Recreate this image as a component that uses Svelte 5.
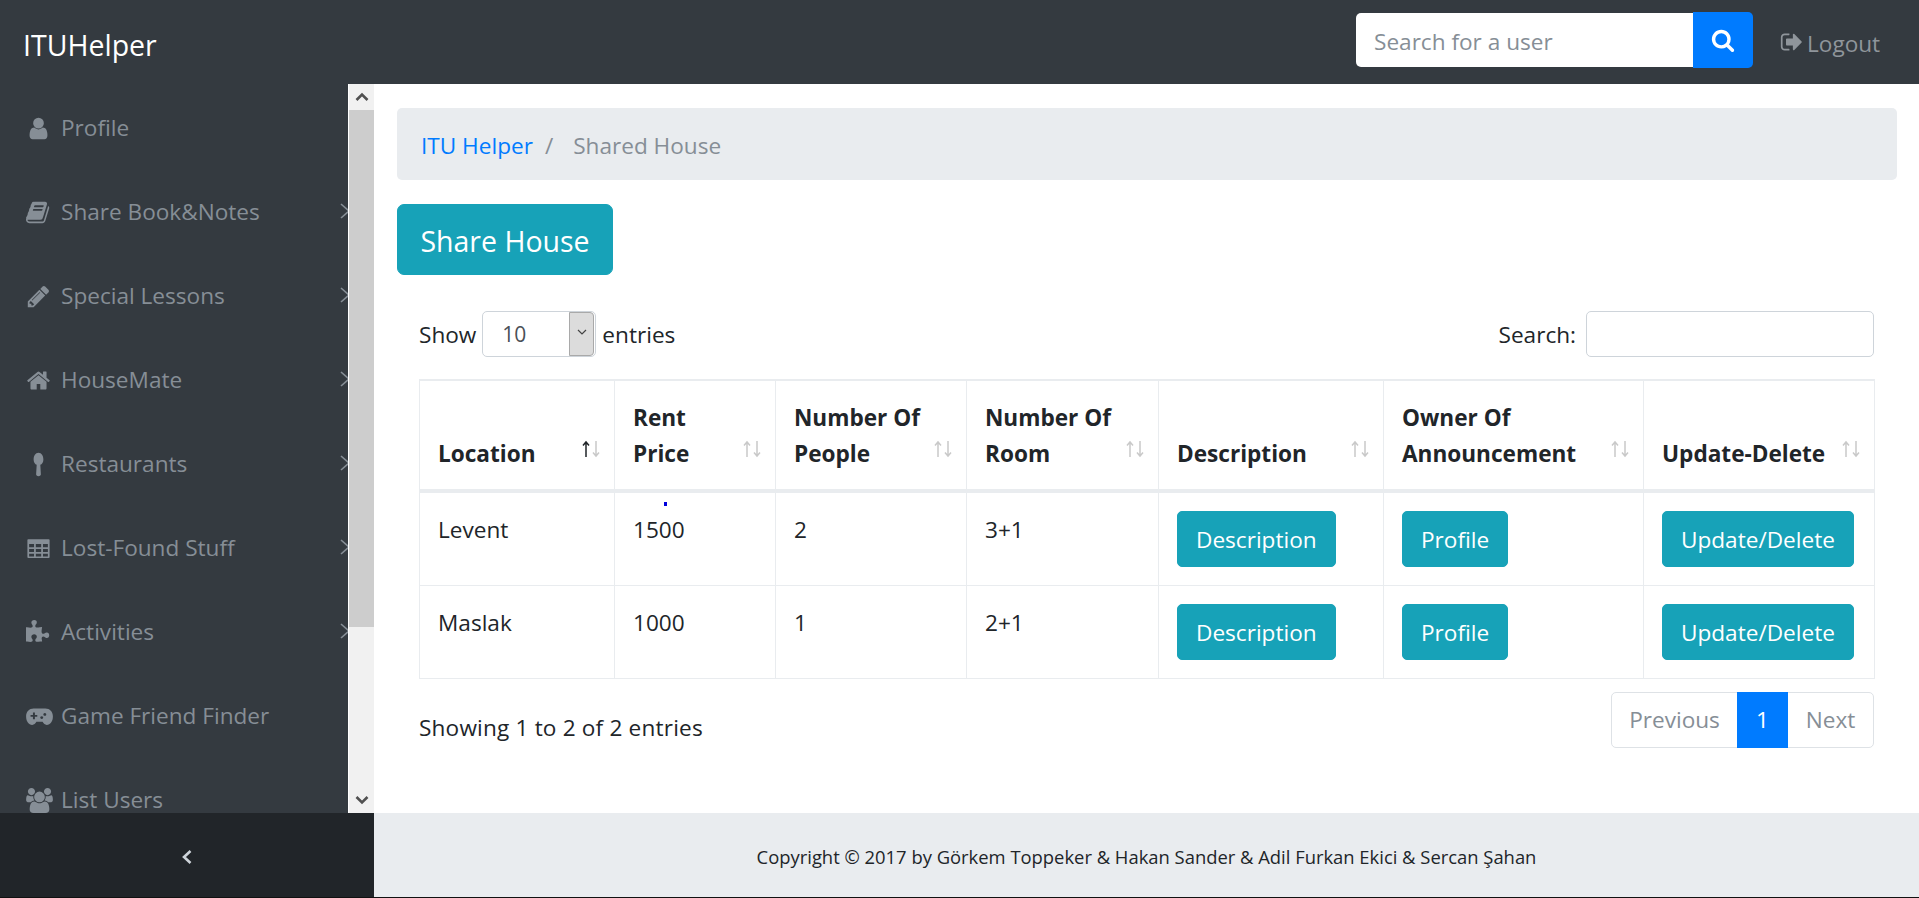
<script>
	const P = {
		user: 'M1536 1399q0 109-62.5 187t-150.5 78h-854q-88 0-150.5-78t-62.5-187q0-85 8.5-160.5t31.5-152 58.5-131 94-89 134.5-34.5q131 128 313 128t313-128q76 0 134.5 34.5t94 89 58.5 131 31.5 152 8.5 160.5zm-256-887q0 159-112.5 271.5t-271.5 112.5-271.5-112.5-112.5-271.5 112.5-271.5 271.5-112.5 271.5 112.5 112.5 271.5z',
		book: 'M1639 478q40 57 18 129l-275 906q-19 64-76.5 107.5t-122.5 43.5h-923q-77 0-148.5-53.5t-99.5-131.5q-24-67-2-127 0-4 3-27t4-37q1-8-3-21.5t-3-19.5q2-11 8-21t16.5-23.5 16.5-23.5q23-38 45-91.5t30-91.5q3-10 .5-30t-.5-28q3-11 17-28t17-23q21-36 42-92t25-90q1-9-2.5-32t.5-28q4-13 22-30.5t22-22.5q19-26 42.5-84.5t27.5-96.5q1-8-3-25.5t-2-26.5q2-8 9-18t18-23 17-21q8-12 16.5-30.5t15-35 16-36 19.5-32 26.5-23.5 36-11.5 47.5 5.5l-1 3q38-9 51-9h761q74 0 114 56t18 130l-274 906q-36 119-71.5 153.5t-128.5 34.5h-869q-27 0-38 15-11 16-1 43 24 70 144 70h923q29 0 56-15.5t35-41.5l300-987q7-22 5-57 38 15 59 43zm-1064 2q-4 13 2 22.5t20 9.5h608q13 0 25.5-9.5t16.5-22.5l21-64q4-13-2-22.5t-20-9.5h-608q-13 0-25.5 9.5t-16.5 22.5zm-83 256q-4 13 2 22.5t20 9.5h608q13 0 25.5-9.5t16.5-22.5l21-64q4-13-2-22.5t-20-9.5h-608q-13 0-25.5 9.5t-16.5 22.5z',
		pencil: 'M491 1536l91-91-235-235-91 91v107h128v128h107zm523-928q0-22-22-22-10 0-17 7l-542 542q-7 7-7 17 0 22 22 22 10 0 17-7l542-542q7-7 7-17zm-54-192l416 416-832 832h-416v-416zm683 96q0 53-37 90l-166 166-416-416 166-165q36-38 90-38 53 0 91 38l235 234q37 39 37 91z',
		home: 'M1472 992v480q0 26-19 45t-45 19h-384v-384h-256v384h-384q-26 0-45-19t-19-45v-480q0-1 .5-3t.5-3l575-474 575 474q1 2 1 6zm223-69l-62 74q-8 9-21 11h-3q-13 0-21-7l-692-577-692 577q-12 8-24 7-13-2-21-11l-62-74q-8-10-7-23.5t11-21.5l719-599q32-26 76-26t76 26l244 204v-195q0-14 9-23t23-9h192q14 0 23 9t9 23v408l219 182q10 8 11 21.5t-7 23.5z',
		spoon: 'M896 60c-220 0-350 220-350 470 0 210 100 340 220 390l-40 680c-4 80 60 130 170 130s174-50 170-130l-40-680c120-50 220-180 220-390 0-250-130-470-350-470z',
		table: 'M160 224h1472q60 0 60 60v1224q0 60-60 60h-1472q-60 0-60-60v-1224q0-60 60-60zm64 352v224h352v-224zm480 0v224h384v-224zm512 0v224h352v-224zm-992 352v224h352v-224zm480 0v224h384v-224zm512 0v224h352v-224zm-992 352v192h352v-192zm480 0v192h384v-192zm512 0v192h352v-192z',
		puzzle: 'M1664 1098q0 81-44.5 135t-123.5 54q-41 0-77.5-17.5t-59-38-56.5-38-71-17.5q-110 0-110 124 0 39 16 115t15 115v5q-22 0-33 1-34 3-97.5 11.5t-115.5 13.5-98 5q-61 0-103-26.5t-42-83.5q0-37 17.5-71t38-56.5 38-59 17.5-77.5q0-79-54-123.5t-135-44.5q-84 0-143 45.5t-59 127.5q0 43 15 83t33.5 64.5 33.5 53 15 50.5q0 45-46 89-37 35-117 35-95 0-245-24-9-2-27.5-4t-27.5-4l-13-2q-2 0-3-1-2 0-2-1v-1024q2 1 17.5 3.5t34 5 21.5 3.5q150 24 245 24 80 0 117-35 46-44 46-89 0-22-15-50.5t-33.5-53-33.5-64.5-15-83q0-82 59-127.5t144-45.5q80 0 134 44.5t54 123.5q0 41-17.5 77.5t-38 59-38 56.5-17.5 71q0 57 42 83.5t103 26.5q64 0 180-15t163-17v2q-1 2-3.5 17.5t-5 34-3.5 21.5q-24 150-24 245 0 80 35 117 44 46 89 46 22 0 50.5-15t53-33.5 64.5-33.5 83-15q82 0 127.5 59t45.5 143z',
		gamepad: 'M540 320h840c320 0 540 220 540 580 0 360-190 600-440 600-130 0-220-80-300-220h-440c-80 140-170 220-300 220-250 0-440-240-440-600 0-360 220-580 540-580zm-50 290v170h-170v140h170v170h140v-170h170v-140h-170v-170zm850 30a105 105 0 1 0 .1 0zm-220 230a105 105 0 1 0 .1 0z',
		users: 'M593 896q-162 5-265 128h-134q-82 0-138-40.5t-56-118.5q0-353 124-353 6 0 43.5 21t97.5 42.5 119 21.5q67 0 133-23-5 37-5 66 0 139 81 256zm1071 637q0 120-73 189.5t-194 69.5h-874q-121 0-194-69.5t-73-189.5q0-53 3.5-103.5t14-109 26.5-108.5 43-97.5 62-81 85.5-53.5 111.5-20q10 0 43 21.5t73 48 107 48 135 21.5 135-21.5 107-48 73-48 43-21.5q61 0 111.5 20t85.5 53.5 62 81 43 97.5 26.5 108.5 14 109 3.5 103.5zm-1024-1277q0 106-75 181t-181 75-181-75-75-181 75-181 181-75 181 75 75 181zm704 384q0 159-112.5 271.5t-271.5 112.5-271.5-112.5-112.5-271.5 112.5-271.5 271.5-112.5 271.5 112.5 112.5 271.5zm576 225q0 78-56 118.5t-138 40.5h-134q-103-123-265-128 81-117 81-256 0-29-5-66 66 23 133 23 59 0 119-21.5t97.5-42.5 43.5-21q124 0 124 353zm-128-609q0 106-75 181t-181 75-181-75-75-181 75-181 181-75 181 75 75 181z',
		search: 'M1216 832q0-185-131.5-316.5t-316.5-131.5-316.5 131.5-131.5 316.5 131.5 316.5 316.5 131.5 316.5-131.5 131.5-316.5zm512 832q0 52-38 90t-90 38q-54 0-90-38l-343-342q-179 124-399 124-143 0-273.5-55.5t-225-150-150-225-55.5-273.5 55.5-273.5 150-225 225-150 273.5-55.5 273.5 55.5 225 150 150 225 55.5 273.5q0 220-124 399l343 343q37 37 37 90z',
		logout: 'M704 1440q0 4 1 20t.5 26.5-3 23.5-10 19.5-20.5 6.5h-320q-119 0-203.5-84.5t-84.5-203.5v-704q0-119 84.5-203.5t203.5-84.5h320q13 0 22.5 9.5t9.5 22.5q0 4 1 20t.5 26.5-3 23.5-10 19.5-20.5 6.5h-320q-66 0-113 47t-47 113v704q0 66 47 113t113 47h312l11.5 1 11.5 3 8 5.5 7 9 2 13.5zm928-544q0 26-19 45l-544 544q-19 19-45 19t-45-19-19-45v-288h-448q-26 0-45-19t-19-45v-384q0-26 19-45t45-19h448v-288q0-26 19-45t45-19 45 19l544 544q19 19 19 45z'
	}

	const menu = [
		{ icon: 'user', label: 'Profile' },
		{ icon: 'book', label: 'Share Book&Notes', more: true },
		{ icon: 'pencil', label: 'Special Lessons', more: true },
		{ icon: 'home', label: 'HouseMate', more: true },
		{ icon: 'spoon', label: 'Restaurants', more: true },
		{ icon: 'table', label: 'Lost-Found Stuff', more: true },
		{ icon: 'puzzle', label: 'Activities', more: true },
		{ icon: 'gamepad', label: 'Game Friend Finder', wide: true },
		{ icon: 'users', label: 'List Users', wide: true }
	]

	const heads = [
		['Location'],
		['Rent', 'Price'],
		['Number Of', 'People'],
		['Number Of', 'Room'],
		['Description'],
		['Owner Of', 'Announcement'],
		['Update-Delete']
	]

	const rows = [
		['Levent', '1500', '2', '3+1'],
		['Maslak', '1000', '1', '2+1']
	]
</script>

<div class="page">
	<header class="navbar">
		<a class="brand" href="#top">ITUHelper</a>
		<form class="search">
			<input type="text" placeholder="Search for a user" />
			<button type="button" aria-label="Search">
				<svg viewBox="0 0 1792 1792" width="24" height="24"><path d={P.search} /></svg>
			</button>
		</form>
		<a class="logout" href="#top">
			<svg viewBox="0 0 1792 1792" width="24" height="24"><path d={P.logout} /></svg>
			<span>Logout</span>
		</a>
	</header>

	<aside class="side">
		<nav>
			{#each menu as m}
				<a class="item" href="#top">
					<span class="ico">
						<svg viewBox={m.wide ? '0 0 1920 1792' : '0 0 1792 1792'} width={m.wide ? 27 : 25} height="25"><path d={P[m.icon]} fill-rule="evenodd" /></svg>
					</span>
					<span>{m.label}</span>
					{#if m.more}
						<svg class="caret" viewBox="0 0 12 18" width="12" height="18"><path d="M2 2l8 7-8 7" /></svg>
					{/if}
				</a>
			{/each}
		</nav>
		<div class="scrollbar">
			<span class="arrow"><svg viewBox="0 0 14 10" width="14" height="10"><path d="M1.5 8L7 2.5 12.5 8" /></svg></span>
			<span class="thumb"></span>
			<span class="rest"></span>
			<span class="arrow"><svg viewBox="0 0 14 10" width="14" height="10"><path d="M1.5 2L7 7.5 12.5 2" /></svg></span>
		</div>
	</aside>

	<main>
		<ol class="crumbs">
			<li><a href="#top">ITU Helper</a></li>
			<li class="sep">/</li>
			<li class="here">Shared House</li>
		</ol>

		<button class="btn big" type="button">Share House</button>

		<section class="wrap">
			<div class="tools">
				<label class="len">
					<span class="lbl">Show</span>
					<span class="pick">
						<select><option>10</option></select>
						<span class="drop"><svg viewBox="0 0 10 6" width="10" height="6"><path d="M1 1l4 4 4-4" /></svg></span>
					</span>
					<span class="lbl">entries</span>
				</label>
				<label class="filter"><span class="lbl">Search:</span> <input type="search" /></label>
			</div>

			<table>
				<thead>
					<tr>
						{#each heads as h, i}
							<th>
								{#each h as line}<div>{line}</div>{/each}
								<svg class="sort" class:asc={i === 0} viewBox="0 0 20 18" width="20" height="18">
									<path class="up" d="M5 17V2M2 5.5L5 2l3 3.5" />
									<path class="down" d="M15 1v15M12 12.5l3 3.5 3-3.5" />
								</svg>
							</th>
						{/each}
					</tr>
				</thead>
				<tbody>
					{#each rows as r}
						<tr>
							{#each r as c}<td class="txt">{c}</td>{/each}
							<td><button class="btn" type="button">Description</button></td>
							<td><button class="btn" type="button">Profile</button></td>
							<td><button class="btn" type="button">Update/Delete</button></td>
						</tr>
					{/each}
				</tbody>
			</table>
			<i class="speck"></i>

			<div class="under">
				<span class="info">Showing 1 to 2 of 2 entries</span>
				<ul class="pages">
					<li>Previous</li>
					<li class="on">1</li>
					<li>Next</li>
				</ul>
			</div>
		</section>
	</main>

	<button class="toggle" type="button" aria-label="Collapse">
		<svg viewBox="0 0 12 16" width="12" height="16"><path d="M9.5 2L3 8l6.5 6" /></svg>
	</button>
	<footer>Copyright © 2017 by Görkem Toppeker &amp; Hakan Sander &amp; Adil Furkan Ekici &amp; Sercan Şahan</footer>
</div>

<style>
	:global(body) {
		margin: 0;
		background: #111;
	}
	:global(*) {
		box-sizing: border-box;
	}
	.page {
		display: grid;
		grid-template-columns: 374px 1fr;
		grid-template-rows: 84px 729px 84px;
		font-family: "Open Sans", "Noto Sans", sans-serif;
		font-size: 22.6px;
		line-height: 36px;
		color: #212529;
		height: 897px;
		overflow: hidden;
	}
	a {
		text-decoration: none;
	}

	.navbar {
		grid-column: 1 / 3;
		background: #343a40;
		display: flex;
		align-items: center;
		padding: 0 36px 0 23px;
	}
	.brand {
		color: #fff;
		font-size: 28.5px;
		margin-right: auto;
		padding-top: 5px;
	}
	.search {
		display: flex;
		align-items: center;
		margin: -4px 0 0;
	}
	.search input {
		width: 337px;
		height: 54px;
		border: 0;
		border-radius: 5px 0 0 5px;
		padding: 2px 18px 0;
		font: inherit;
		outline: none;
	}
	.search input::placeholder {
		color: #868e96;
		opacity: 1;
	}
	.search button {
		width: 60px;
		height: 56px;
		border: 0;
		border-radius: 0 5px 5px 0;
		background: #007bff;
		display: flex;
		align-items: center;
		justify-content: center;
		padding: 0;
	}
	.search svg {
		fill: #fff;
	}
	.logout {
		color: #8f959b;
		margin-left: 27px;
		display: flex;
		align-items: center;
		gap: 3px;
		width: 103px;
		white-space: nowrap;
	}
	.logout span {
		padding-top: 4px;
	}
	.logout svg {
		fill: #8f959b;
	}

	.side {
		display: flex;
		background: #343a40;
		min-height: 0;
	}
	nav {
		width: 348px;
		overflow: hidden;
		padding-top: 1px;
	}
	.item {
		display: flex;
		align-items: center;
		height: 84px;
		padding: 2px 0 0 24px;
		color: #868e96;
		position: relative;
		white-space: nowrap;
	}
	.ico {
		width: 37px;
		flex: none;
		display: flex;
	}
	.ico svg {
		fill: #868e96;
		margin-left: 2px;
	}
	.caret {
		position: absolute;
		right: -3px;
		top: 33px;
		fill: none;
		stroke: #868e96;
		stroke-width: 1.6;
	}
	.scrollbar {
		width: 26px;
		border-left: 1px solid #fff;
		background: #f1f1f1;
		display: flex;
		flex-direction: column;
	}
	.arrow {
		height: 26px;
		display: flex;
		align-items: center;
		justify-content: center;
	}
	.arrow svg {
		fill: none;
		stroke: #505050;
		stroke-width: 2.6;
	}
	.thumb {
		height: 517px;
		background: #cdcdcd;
	}
	.rest {
		flex: 1;
	}

	main {
		background: #fff;
		padding: 24px 22px 0 23px;
		min-width: 0;
	}
	.crumbs {
		display: flex;
		list-style: none;
		margin: 0 0 24px;
		height: 72px;
		padding: 20px 24px 16px;
		border-radius: 5px;
		background: #e9ecef;
		color: #868e96;
	}
	.crumbs a {
		color: #007bff;
	}
	.sep {
		padding: 0 20px 0 12px;
	}
	.btn {
		font: inherit;
		color: #fff;
		background: #17a2b8;
		border: 1px solid #17a2b8;
		border-radius: 5px;
		height: 56px;
		padding: 2px 18px 0;
		display: block;
	}
	.big {
		font-size: 28.5px;
		height: 71px;
		width: 216px;
		border-radius: 7px;
		padding: 3px 0 0;
	}

	.wrap {
		position: relative;
		padding: 36px 23px 0 22px;
	}
	.tools {
		display: flex;
		justify-content: space-between;
		align-items: center;
		height: 46px;
	}
	.len, .filter {
		display: flex;
		align-items: center;
	}
	.lbl {
		padding-top: 2px;
	}
	.pick {
		position: relative;
		display: block;
		margin: 0 6px 0 6px;
	}
	select {
		appearance: none;
		display: block;
		width: 114px;
		height: 46px;
		border: 1px solid #ced4da;
		border-radius: 5px;
		background: #fff;
		color: #495057;
		font: inherit;
		font-size: 21px;
		padding: 0 19px;
	}
	.drop {
		position: absolute;
		right: 2px;
		top: 1px;
		bottom: 1px;
		width: 25px;
		background: #dcdcdc;
		border: 1px solid #a9a9a9;
		border-radius: 0 4px 4px 0;
		display: flex;
		align-items: center;
		justify-content: center;
	}
	.drop svg {
		fill: none;
		stroke: #444;
		stroke-width: 1.2;
		margin-top: -4px;
	}
	.filter input {
		width: 288px;
		height: 46px;
		border: 1px solid #ced4da;
		border-radius: 5px;
		margin-left: 10px;
		outline: none;
	}

	table {
		width: 1455px;
		margin-top: 22px;
		border-collapse: collapse;
		table-layout: fixed;
	}
	th, td {
		border: 1px solid #e9ecef;
		padding: 18px;
		vertical-align: top;
		text-align: left;
		line-height: 36px;
	}
	th {
		position: relative;
		vertical-align: bottom;
		border-top-width: 2px;
		border-bottom-width: 4px;
		height: 111px;
		padding: 19px 18px 17px;
		font-weight: 700;
		white-space: nowrap;
	}
	th:nth-child(1) { width: 195px; }
	th:nth-child(2) { width: 161px; }
	th:nth-child(3) { width: 191px; }
	th:nth-child(4) { width: 192px; }
	th:nth-child(5) { width: 225px; }
	th:nth-child(6) { width: 260px; }
	th:nth-child(7) { width: 231px; }
	td {
		height: 93px;
	}
	td.txt {
		padding-top: 19px;
		padding-bottom: 17px;
	}
	tbody tr:last-child td {
		padding-bottom: 17px;
	}
	.sort {
		position: absolute;
		right: 13px;
		bottom: 31px;
		fill: none;
		stroke: #c9c9c9;
		stroke-width: 1.5;
	}
	.sort.asc .up {
		stroke: #212529;
	}
	.speck {
		position: absolute;
		left: 267px;
		top: 227px;
		width: 3px;
		height: 4px;
		background: #0000dc;
	}

	.under {
		display: flex;
		justify-content: space-between;
		margin-top: 13px;
	}
	.info {
		padding-top: 18px;
		letter-spacing: 0.18px;
	}
	.pages {
		display: flex;
		list-style: none;
		margin: 0;
		padding: 0;
		height: 56px;
		border: 1px solid #dee2e6;
		border-radius: 5px;
		color: #868e96;
		line-height: 54px;
		text-align: center;
	}
	.pages li:nth-child(1) { width: 125px; }
	.pages li:nth-child(3) { width: 85px; }
	.pages .on {
		width: 51px;
		margin: -1px 0;
		line-height: 56px;
		background: #007bff;
		color: #fff;
	}

	.toggle {
		background: #212529;
		border: 0;
		display: flex;
		align-items: center;
		justify-content: center;
		padding: 3px 0 0;
	}
	.toggle svg {
		fill: none;
		stroke: #ced4da;
		stroke-width: 2.6;
	}
	footer {
		background: #e9ecef;
		display: flex;
		align-items: center;
		justify-content: center;
		font-size: 18.4px;
		padding-top: 4px;
	}
</style>
